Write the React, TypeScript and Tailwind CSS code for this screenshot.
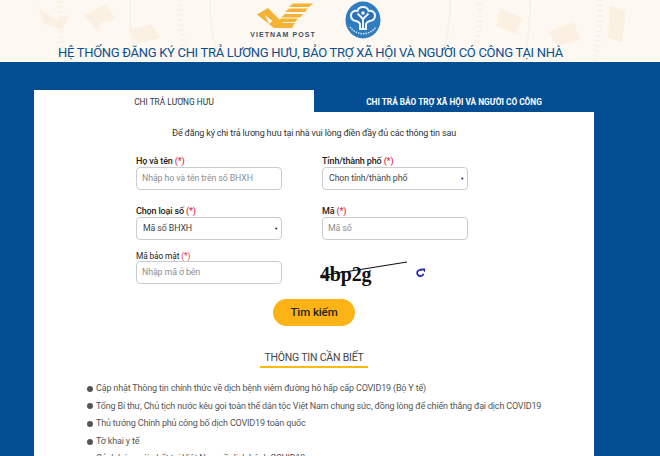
const newsItems = [
  'Cập nhật Thông tin chính thức về dịch bệnh viêm đường hô hấp cấp COVID19 (Bộ Y tế)',
  'Tổng Bí thư, Chủ tịch nước kêu gọi toàn thể dân tộc Việt Nam chung sức, đồng lòng để chiến thắng đại dịch COVID19',
  'Thủ tướng Chính phủ công bố dịch COVID19 toàn quốc',
  'Tờ khai y tế',
  'Cảnh báo mới nhất tại Việt Nam về dịch bệnh COVID19',
];

function Label({ text }: { text: string }) {
  return (
    <label className="block h-[15px] text-[9px] font-medium leading-[19px] tracking-[-0.15px] text-[#222]">
      {text} <span className="text-[#d9304f]">(*)</span>
    </label>
  );
}

function TextField({ placeholder }: { placeholder: string }) {
  return (
    <div className="flex h-[23px] w-[146px] items-center rounded-[4px] border border-[#c9ccd1] bg-white pl-[5px] text-[8.8px] tracking-[-0.1px] text-[#8a8f94]">
      {placeholder}
    </div>
  );
}

function SelectField({ value }: { value: string }) {
  return (
    <div className="flex h-[23px] w-[146px] items-center justify-between rounded-[4px] border border-[#c9ccd1] bg-white pl-[6px] pr-[3px] text-[8.8px] tracking-[-0.1px] text-[#444]">
      <span>{value}</span>
      <span className="text-[4px] text-black">▼</span>
    </div>
  );
}

function Pattern() {
  return (
    <svg className="absolute inset-0 h-[62px] w-[660px]" viewBox="0 0 660 62" fill="none">
      <g stroke="#fbf1e4" strokeWidth="2">
        <circle cx="330" cy="10" r="120" />
        <circle cx="330" cy="10" r="150" strokeDasharray="2 3" strokeWidth="5" />
        <circle cx="330" cy="10" r="200" />
        <circle cx="330" cy="10" r="270" strokeDasharray="2 3" strokeWidth="6" />
        <circle cx="330" cy="10" r="345" strokeDasharray="2 3" strokeWidth="6" />
      </g>
      <g fill="#fbf0e2">
        <path d="M38 6l18 14 14-6-8 16-18-6z" />
        <path d="M84 16l22-12 10 16-14 2-4 10z" />
        <path d="M128 30l24-6 8 14-22 6z" />
        <path d="M500 8l22 10-6 16-20-8z" />
        <path d="M548 32l26-10 6 18-22 6z" />
        <path d="M610 6l16 4-4 32-14-4z" />
      </g>
    </svg>
  );
}

function VietnamPostLogo() {
  return (
    <div className="flex w-[70px] flex-col items-center">
      <svg width="62" height="29" viewBox="0 0 62 29">
        <g fill="#f5b335">
          <path d="M41 2.500h20L57 6H37z" />
          <path d="M37 7.500h19L53 11H33z" />
          <path d="M33 13h18l-3 3.500H29z" />
          <path d="M29 17.500h17l-3 3.500H25z" />
          <path d="M5 13.500L16 7l15 15h12l-3 5H22z" />
        </g>
        <path d="M13 14l7.500 6-3.500 3z" fill="#fdf9f2" />
      </svg>
      <span className="whitespace-nowrap font-['Liberation_Sans',sans-serif] text-[7px] font-bold leading-[9px] tracking-[1.1px] text-[#3f5161]">
        VIETNAM POST
      </span>
    </div>
  );
}

function BhxhLogo() {
  return (
    <svg width="36" height="38" viewBox="0 0 36 38" fill="none">
      <ellipse cx="18" cy="19" rx="17.5" ry="18.5" fill="#2f7cc0" />
      <path
        d="M18 6c3 0 5 2 5.500 4 3-1 6.500 1 6.500 4.500 0 3-2 5-5 5.500-2 .5-3.500 1-4 3v5h-6v-5c-.5-2-2-2.500-4-3-3-.5-5-2.500-5-5.500C6 11 9.500 9 12.500 10 13 8 15 6 18 6z"
        fill="#2a70b2"
        stroke="#eef5fb"
        strokeWidth="2"
      />
      <path d="M12.500 12.500L18 18l5.500-5.500M18 18v10" stroke="#eef5fb" strokeWidth="2" />
      <circle cx="18" cy="12" r="1.800" fill="#eef5fb" />
      <path d="M5 26a16 16 0 0 0 26 0" stroke="#dbe9f6" strokeWidth="1.500" strokeDasharray="1.500 1" />
    </svg>
  );
}

function RefreshIcon() {
  return (
    <svg className="mt-[7px] ml-[8px]" width="9" height="9" viewBox="0 0 9 9" fill="none">
      <path d="M7.500 5.800A3.200 3.200 0 1 1 6.400 2.400" stroke="#1c1cc4" strokeWidth="1.700" />
      <path d="M5.300 .5L9 .5V4.200z" fill="#1c1cc4" />
    </svg>
  );
}

export default function App() {
  return (
    <div className="flex h-[456px] w-[660px] flex-col overflow-hidden bg-[#034e92] font-['Roboto','Noto_Sans',sans-serif]">
      <header className="relative h-[62px] shrink-0 bg-[#fdf9f2]">
        <Pattern />
        <div className="relative flex flex-col items-center">
          <div className="flex h-[39px] items-start gap-[27px] pt-[1px] pr-[31px]">
            <VietnamPostLogo />
            <BhxhLogo />
          </div>
          <h1 className="whitespace-nowrap pr-[39px] text-[13px] leading-[28px] tracking-[-0.3px] text-[#0a4f8f]">
            HỆ THỐNG ĐĂNG KÝ CHI TRẢ LƯƠNG HƯU, BẢO TRỢ XÃ HỘI VÀ NGƯỜI CÓ CÔNG TẠI NHÀ
          </h1>
        </div>
      </header>

      <main className="ml-[34px] w-[560px] pt-[28px]">
        <div className="flex h-[22px] text-[8.3px] leading-[22px]">
          <div className="w-[280px] bg-white pt-[1px] text-center text-[#333]">CHI TRẢ LƯƠNG HƯU</div>
          <div className="w-[280px] pt-[1px] text-center font-bold text-white">CHI TRẢ BẢO TRỢ XÃ HỘI VÀ NGƯỜI CÓ CÔNG</div>
        </div>

        <section className="h-[400px] bg-white">
          <p className="pt-[14px] text-center text-[9px] leading-[15px] tracking-[-0.17px] text-[#333]">
            Để đăng ký chi trả lương hưu tại nhà vui lòng điền đầy đủ các thông tin sau
          </p>

          <div className="mt-[11px] ml-[102px] grid w-[332px] grid-cols-2 gap-x-[40px] gap-y-[12px]">
            <div>
              <Label text="Họ và tên" />
              <TextField placeholder="Nhập họ và tên trên số BHXH" />
            </div>
            <div>
              <Label text="Tỉnh/thành phố" />
              <SelectField value="Chọn tỉnh/thành phố" />
            </div>
            <div>
              <Label text="Chọn loại số" />
              <SelectField value="Mã số BHXH" />
            </div>
            <div>
              <Label text="Mã" />
              <TextField placeholder="Mã số" />
            </div>
            <div>
              <label className="block h-[9px] text-[8.3px] leading-[8px] tracking-[-0.1px] text-[#222]">
                Mã bảo mật <span className="text-[#d9304f]">(*)</span>
              </label>
              <TextField placeholder="Nhập mã ở bên" />
            </div>
            <div className="flex h-[32px] items-start pt-[9px]">
              <div className="relative h-[23px] w-[86px]">
                <span className="ml-[-2px] block font-['Liberation_Serif',serif] text-[20px] font-bold leading-[26px] tracking-[-0.2px] text-[#111]">
                  4bp2g
                </span>
                <svg className="absolute left-[-2px] top-0" width="88" height="26" viewBox="0 0 88 26" fill="none">
                  <path d="M0 15 L87 1" stroke="#111" strokeWidth="1.2" />
                </svg>
              </div>
              <RefreshIcon />
            </div>
          </div>

          <div className="mt-[15px] flex justify-center">
            <button className="h-[27px] w-[82px] rounded-[14px] bg-[#fdb316] text-[11.5px] font-medium tracking-[-0.1px] text-[#222]">
              Tìm kiếm
            </button>
          </div>

          <div className="mt-[24px] flex justify-center">
            <h2 className="border-b-2 border-[#fdb913] px-[4px] text-[10.5px] font-normal leading-[16px] tracking-[-0.2px] text-[#444]">
              THÔNG TIN CẦN BIẾT
            </h2>
          </div>

          <ul className="mt-[12px] pl-[53px] text-[9px] leading-[17.6px] tracking-[-0.17px] text-[#555]">
            {newsItems.map((item) => (
              <li key={item} className="flex items-center whitespace-nowrap">
                <span className="mr-[3px] h-[6px] w-[6px] shrink-0 rounded-full bg-[#555]" />
                {item}
              </li>
            ))}
          </ul>
        </section>
      </main>
    </div>
  );
}
